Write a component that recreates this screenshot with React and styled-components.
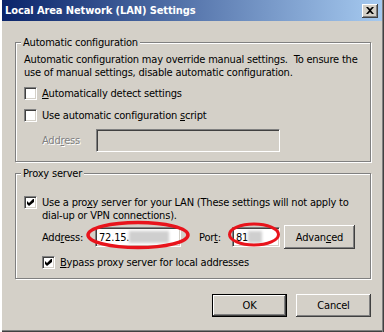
import React from "react";
import styled, { createGlobalStyle } from "styled-components";

const GlobalStyle = createGlobalStyle`
  html, body {
    margin: 0;
    padding: 0;
    background: #d4d0c8;
  }
  body {
    font-family: "DejaVu Sans Condensed", "DejaVu Sans", sans-serif;
    font-size: 11px;
    letter-spacing: -0.2px;
    color: #000;
  }
`;

const Check = ({ checked }) => (
  <CheckBox>
    {checked && (
      <svg width="7" height="7" viewBox="0 0 7 7">
        <path d="M0 2 L2 4 L6 0 L7 0 L7 3 L2 7 L0 5 Z" fill="#000" />
      </svg>
    )}
  </CheckBox>
);

const Ellipses = () => (
  <Overlay width="384" height="332" viewBox="0 0 384 332">
    <ellipse cx="138" cy="235" rx="50" ry="12.5" fill="none" stroke="#e8141c" strokeWidth="3.5" />
    <ellipse cx="254" cy="234.5" rx="24.5" ry="10.5" fill="none" stroke="#e8141c" strokeWidth="3" />
  </Overlay>
);

export default function App() {
  return (
    <>
      <GlobalStyle />
      <Window>
        <TitleBar>
          <Title>Local Area Network (LAN) Settings</Title>
          <CloseButton>
            <svg width="8" height="7" viewBox="0 0 8 7">
              <path d="M0 0h2l2 2 2-2h2L5 3.5 8 7H6L4 5 2 7H0l3-3.5z" fill="#000" />
            </svg>
          </CloseButton>
        </TitleBar>

        <Body>
          <Group $top={15}>
            <Legend>Automatic configuration</Legend>
            <Description>
              Automatic configuration may override manual settings.&nbsp; To ensure the
              <br />
              use of manual settings, disable automatic configuration.
            </Description>
            <CheckRow $top={8}>
              <Check />
              <span>
                <U>A</U>utomatically detect settings
              </span>
            </CheckRow>
            <CheckRow $top={9}>
              <Check />
              <span>
                Use automatic configuration <U>s</U>cript
              </span>
            </CheckRow>
            <FieldRow $top={7} $indent={18}>
              <FieldLabel $disabled $width={54}>
                Add<U>r</U>ess
              </FieldLabel>
              <TextBox $disabled $width={184} $height={23} />
            </FieldRow>
          </Group>

          <Group $top={5}>
            <Legend>Proxy server</Legend>
            <CheckRow $top={16}>
              <Check checked />
              <span>
                Use a pro<U>x</U>y server for your LAN (These settings will not apply to
                <br />
                dial-up or VPN connections).
              </span>
            </CheckRow>
            <FieldRow $top={3} $indent={18}>
              <FieldLabel $width={53}>
                Add<U>r</U>ess:
              </FieldLabel>
              <TextBox $width={86} $height={20}>
                72.15.<Blur $width={40} />
              </TextBox>
              <FieldLabel $width={33} $gap={18}>
                Por<U>t</U>:
              </FieldLabel>
              <TextBox $width={48} $height={20}>
                81<Blur $width={14} />
              </TextBox>
              <Button $width={71} $height={24} $gap={4}>
                Advan<U>c</U>ed
              </Button>
            </FieldRow>
            <CheckRow $top={7} $indent={18}>
              <Check checked />
              <span>
                <U>B</U>ypass proxy server for local addresses
              </span>
            </CheckRow>
          </Group>

          <ButtonRow>
            <DefaultButton>OK</DefaultButton>
            <Button $width={75} $height={23}>
              Cancel
            </Button>
          </ButtonRow>
        </Body>

        <Ellipses />
      </Window>
    </>
  );
}

const Window = styled.div`
  position: relative;
  width: 384px;
  height: 332px;
  box-sizing: border-box;
  padding: 0 2px 2px 2px;
  background: #d4d0c8;
  box-shadow: inset 2px 0 #fff, inset 1px 0 #d4d0c8, inset -1px 0 #404040,
    inset -2px 0 #808080, inset 0 -1px #404040, inset 0 -2px #808080;
  display: flex;
  flex-direction: column;
  overflow: hidden;
`;

const TitleBar = styled.div`
  height: 21px;
  display: flex;
  align-items: center;
  justify-content: space-between;
  padding: 0 4px 0 3px;
  background: linear-gradient(to right, #0a246a, #a6caf0);
`;

const Title = styled.div`
  color: #fff;
  font-weight: bold;
  font-size: 11px;
  letter-spacing: -0.1px;
`;

const CloseButton = styled.div`
  width: 16px;
  height: 14px;
  box-sizing: border-box;
  background: #d4d0c8;
  display: flex;
  align-items: center;
  justify-content: center;
  box-shadow: inset -1px -1px #404040, inset 1px 1px #fff, inset -2px -2px #808080,
    inset 2px 2px #d4d0c8;
`;

const Body = styled.div`
  flex: 1;
  display: flex;
  flex-direction: column;
  padding: 0 11px 0 13px;
`;

const Group = styled.fieldset`
  margin: ${(p) => p.$top}px 0 0 0;
  padding: 0 8px 9px 8px;
  border: 1px solid #808080;
  box-shadow: inset 1px 1px #fff, 1px 1px #fff;
  min-width: 0;
`;

const Legend = styled.legend`
  margin-left: -3px;
  padding: 0 2px;
  line-height: 13px;
  background: #d4d0c8;
`;

const Description = styled.div`
  margin-top: 4px;
  line-height: 13px;
  white-space: nowrap;
`;

const CheckRow = styled.div`
  margin-top: ${(p) => p.$top}px;
  margin-left: ${(p) => p.$indent || 0}px;
  display: flex;
  align-items: flex-start;
  gap: 5px;
  line-height: 13px;
  white-space: nowrap;
`;

const CheckBox = styled.div`
  flex: none;
  width: 13px;
  height: 13px;
  box-sizing: border-box;
  background: #fff;
  border: 1px solid;
  border-color: #808080 #fff #fff #808080;
  box-shadow: inset 1px 1px #404040, inset -1px -1px #d4d0c8;
  display: flex;
  align-items: center;
  justify-content: center;
`;

const FieldRow = styled.div`
  margin-top: ${(p) => p.$top}px;
  margin-left: ${(p) => p.$indent || 0}px;
  display: flex;
  align-items: center;
  white-space: nowrap;
`;

const FieldLabel = styled.span`
  width: ${(p) => p.$width}px;
  margin-left: ${(p) => p.$gap || 0}px;
  color: ${(p) => (p.$disabled ? "#808080" : "#000")};
  text-shadow: ${(p) => (p.$disabled ? "1px 1px #fff" : "none")};
`;

const TextBox = styled.div`
  width: ${(p) => p.$width}px;
  height: ${(p) => p.$height}px;
  box-sizing: border-box;
  padding: 0 3px;
  display: flex;
  align-items: center;
  background: ${(p) => (p.$disabled ? "#d4d0c8" : "#fff")};
  border: 1px solid;
  border-color: #808080 #fff #fff #808080;
  box-shadow: inset 1px 1px #404040, inset -1px -1px #d4d0c8;
`;

const Blur = styled.span`
  display: inline-block;
  width: ${(p) => p.$width}px;
  height: 12px;
  background: #cfcfcf;
  filter: blur(1.5px);
`;

const Button = styled.div`
  width: ${(p) => p.$width}px;
  height: ${(p) => p.$height}px;
  margin-left: ${(p) => p.$gap || 0}px;
  box-sizing: border-box;
  display: flex;
  align-items: center;
  justify-content: center;
  background: #d4d0c8;
  box-shadow: inset -1px -1px #404040, inset 1px 1px #fff, inset -2px -2px #808080,
    inset 2px 2px #d4d0c8;
`;

const DefaultButton = styled(Button).attrs({ $width: 75, $height: 23 })`
  border: 1px solid #000;
`;

const ButtonRow = styled.div`
  margin-top: 15px;
  display: flex;
  justify-content: flex-end;
  gap: 9px;
`;

const U = styled.span`
  text-decoration: underline;
`;

const Overlay = styled.svg`
  position: absolute;
  left: 0;
  top: 0;
  pointer-events: none;
`;
